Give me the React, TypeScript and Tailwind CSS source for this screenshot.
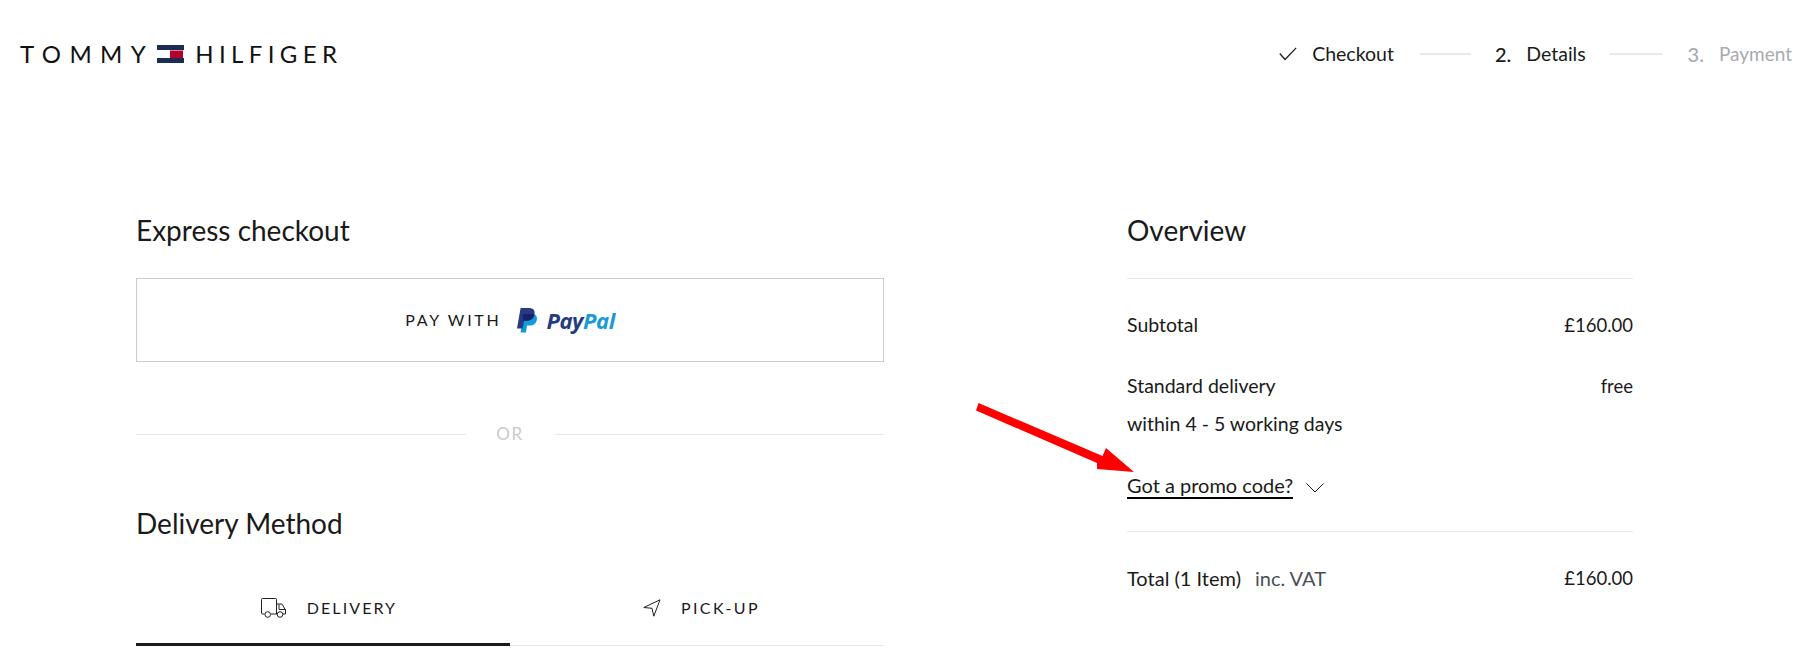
const Flag = () => (
  <svg width="27" height="18" viewBox="0 0 27 18" className="mx-[11px] shrink-0">
    <rect x="0" y="0" width="27" height="5" fill="#1d2c52" />
    <rect x="0" y="13" width="27" height="5" fill="#1d2c52" />
    <rect x="13" y="5.5" width="13" height="7.5" fill="#b4002c" />
  </svg>
);

const PayPalMark = () => (
  <svg width="21" height="25" viewBox="0 0 21 25" className="shrink-0">
    <path d="M6 6h8.5c3.4 0 6 1.800 5.400 5.400-.7 4.200-3.400 6-7 6H10l-1 7H3.600z" fill="#0d9ddb" />
    <path d="M3.600 0h8.200c4 0 6.400 2 5.700 6-.8 4.500-3.700 6.800-7.800 6.800H7l-1.300 7.700H0z" fill="#253b80" />
    <path d="M6 6h11.500c-.8 4.500-3.700 6.800-7.800 6.800H7l-1 .5z" fill="#1b1f6b" />
  </svg>
);

const TruckIcon = () => (
  <svg width="26" height="20" viewBox="0 0 26 20" fill="none" stroke="#1f1f1f" strokeWidth="1" className="shrink-0">
    <path d="M3.500 16H1.500a1 1 0 0 1-1-1V1.500a1 1 0 0 1 1-1h13a1 1 0 0 1 1 1V16H10" />
    <path d="M15.500 6H21l3.500 6v4H22M15.500 16H16M18 6.500v5h6.500" />
    <circle cx="6.700" cy="16.500" r="2.800" />
    <circle cx="19" cy="16.500" r="2.800" />
  </svg>
);

const PickupIcon = () => (
  <svg width="18" height="18" viewBox="0 0 18 18" fill="none" stroke="#1f1f1f" strokeWidth="1" strokeLinejoin="round" className="shrink-0">
    <path d="M17 .8 .8 8.500l8.200.8 1.800 7.900z" />
  </svg>
);

const Row = ({ label, value }: { label: string; value: string }) => (
  <div className="flex items-center justify-between leading-7">
    <span>{label}</span>
    <span className="text-[18.500px]">{value}</span>
  </div>
);

export default function App() {
  return (
    <div className="relative h-[652px] overflow-hidden bg-white font-['Lato',sans-serif] text-[#1a1a1a]">
      <header className="flex h-[108px] items-center justify-between pl-5 pr-[13px]">
        <div className="flex items-center text-[24px] leading-none text-[#111]">
          <span className="tracking-[0.35em] -mr-[8px]">TOMMY</span>
          <Flag />
          <span className="tracking-[0.225em] -mr-[5px]">HILFIGER</span>
        </div>
        <nav className="flex items-center text-[19.500px]">
          <svg width="18" height="14" viewBox="0 0 18 14" fill="none" stroke="#1a1a1a" strokeWidth="1.200" className="mr-[15px]">
            <path d="M.8 6.500 6 12.500 17.200 .8" />
          </svg>
          <span>Checkout</span>
          <span className="ml-[26px] mr-6 h-[2px] w-[51px] bg-[#e8e8e8]" />
          <span className="mr-[15px] text-[20px] font-medium">2.</span>
          <span>Details</span>
          <span className="ml-6 mr-[26px] h-[2px] w-[52px] bg-[#e8e8e8]" />
          <span className="mr-[15px] text-[20px] font-medium text-[#a8abb0]">3.</span>
          <span className="text-[19px] text-[#a8abb0]">Payment</span>
        </nav>
      </header>

      <main className="flex pl-[136px] pt-[101px]">
        <section className="w-[748px]">
          <h2 className="text-[28px] leading-[42px]">Express checkout</h2>
          <button
            type="button"
            className="mt-[27px] flex h-[84px] w-full items-center justify-center gap-2 border border-[#c9ccd2]"
          >
            <span className="mr-2 text-[16px] tracking-[0.17em]">PAY WITH</span>
            <PayPalMark />
            <span className="font-['Open_Sans',sans-serif] text-[22px] font-bold italic leading-none tracking-[-0.02em]">
              <span className="text-[#253b80]">Pay</span>
              <span className="text-[#179bd7]">Pal</span>
            </span>
          </button>
          <div className="mt-[62px] flex items-center">
            <span className="h-px flex-1 bg-[#e8e8e8]" />
            <span className="w-[89px] text-center text-[17px] leading-5 tracking-[0.1em] text-[#c8cbd0]">OR</span>
            <span className="h-px flex-1 bg-[#e8e8e8]" />
          </div>
          <h2 className="mt-[58px] text-[28px] leading-[42px]">Delivery Method</h2>
          <div className="mt-[39px] flex">
            <div className="flex h-[63px] w-1/2 items-center justify-center gap-[20px] border-b-[3px] border-[#1a1a1a] pb-[10px] pl-[12px] text-[16px] tracking-[0.13em]">
              <TruckIcon />
              <span>DELIVERY</span>
            </div>
            <div className="flex h-[63px] w-1/2 items-center justify-center gap-[20px] border-b border-[#e8e8e8] pb-3 pl-[9px] text-[16px] tracking-[0.15em]">
              <PickupIcon />
              <span>PICK-UP</span>
            </div>
          </div>
        </section>

        <section className="ml-[243px] w-[506px] text-[19.500px]">
          <h2 className="border-b border-[#e8e8e8] pb-[27px] text-[28px] leading-[42px]">Overview</h2>
          <div className="border-b border-[#e8e8e8] pb-[32px] pt-[32px]">
            <Row label="Subtotal" value="£160.00" />
            <div className="mt-[33px]">
              <Row label="Standard delivery" value="free" />
            </div>
            <p className="mt-[10px] leading-7">within 4 - 5 working days</p>
            <div className="mt-[35px] flex items-center gap-[13px]">
              <span className="border-b-2 border-black text-[20px] leading-[24px]">Got a promo code?</span>
              <svg width="18" height="10" viewBox="0 0 18 10" fill="none" stroke="#1a1a1a" strokeWidth="1" className="mt-1">
                <path d="M.5 .5 9 9 17.500 .5" />
              </svg>
            </div>
          </div>
          <div className="flex items-center justify-between pt-[32px] leading-7">
            <span className="text-[20px]">
              Total (1 Item)
              <span className="ml-[14px] text-[#4a4f57]">inc. VAT</span>
            </span>
            <span className="text-[18.500px]">£160.00</span>
          </div>
        </section>
      </main>

      {/* annotation drawn on top of the page */}
      <svg width="170" height="80" viewBox="0 0 170 80" className="absolute left-[970px] top-[400px]">
        <path d="M8.500 3 6 10.500 127 63 127 69 164 72 136 48 132.500 56z" fill="#fe0000" />
      </svg>
    </div>
  );
}
